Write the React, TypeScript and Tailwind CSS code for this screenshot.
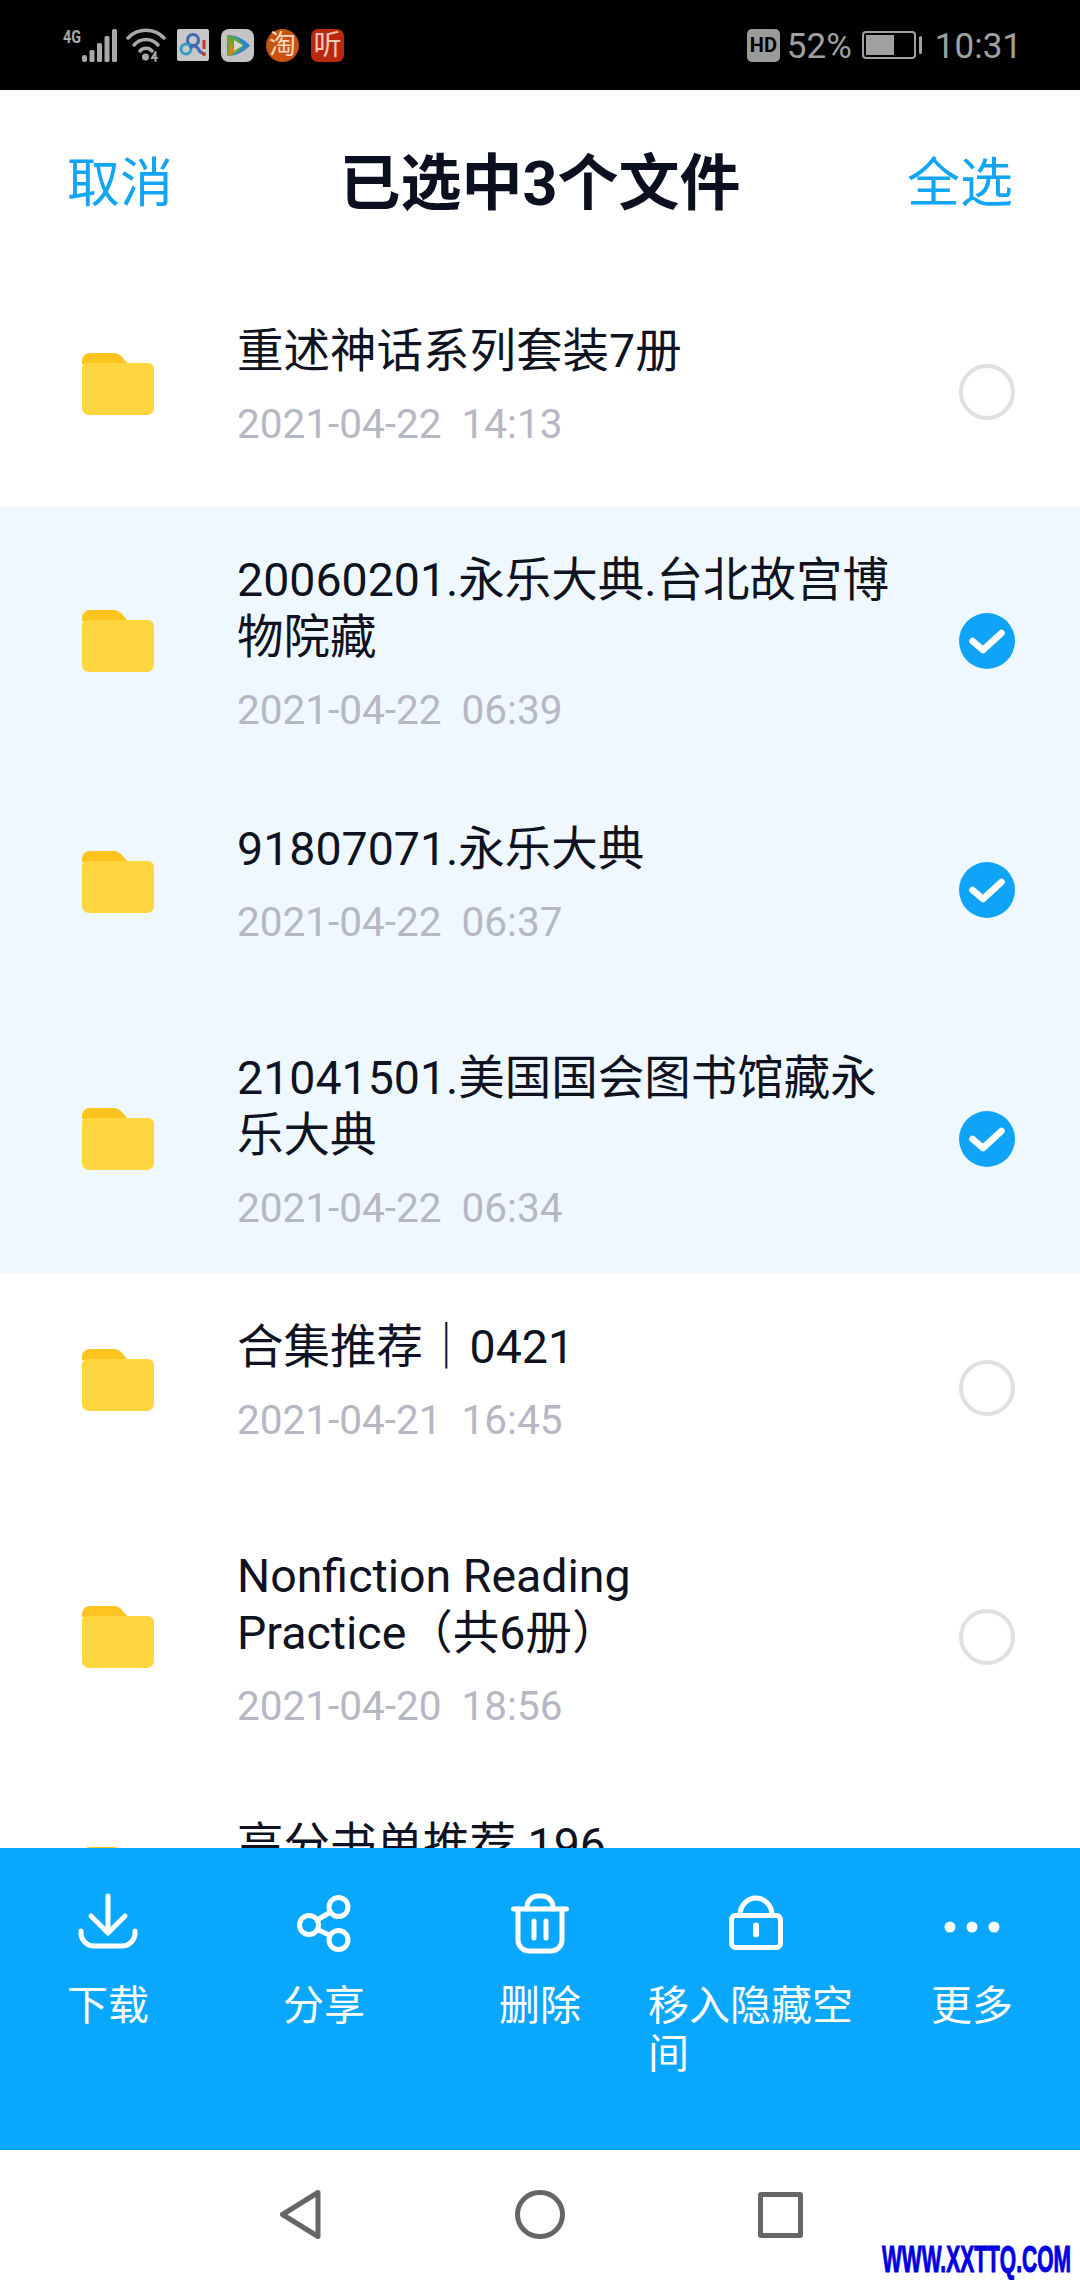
const sans = "font-['Roboto','Noto_Sans_CJK_SC',sans-serif]";

const files = [
  { name: "重述神话系列套装7册", date: "2021-04-22  14:13", two: false, on: false },
  { name: "20060201.永乐大典.台北故宫博物院藏", date: "2021-04-22  06:39", two: true, on: true },
  { name: "91807071.永乐大典", date: "2021-04-22  06:37", two: false, on: true },
  { name: "21041501.美国国会图书馆藏永乐大典", date: "2021-04-22  06:34", two: true, on: true },
  { name: "合集推荐｜0421", date: "2021-04-21  16:45", two: false, on: false },
  { name: "Nonfiction Reading\nPractice（共6册）", date: "2021-04-20  18:56", two: true, on: false },
  { name: "高分书单推荐 196", date: "2021-04-19  20:10", two: false, on: false },
];

const Folder = () => (
  <svg width="72" height="62" viewBox="0 0 72 62" className="shrink-0">
    <path d="M0 8a8 8 0 0 1 8-8h24a10 10 0 0 1 7 3l7 8H0z" fill="#fdc31f" />
    <path d="M0 15a5 5 0 0 1 5-5h61a6 6 0 0 1 6 6v39a7 7 0 0 1-7 7H7a7 7 0 0 1-7-7z" fill="#ffd640" />
  </svg>
);

const Check = ({ on }: { on: boolean }) =>
  on ? (
    <svg width="56" height="56" viewBox="0 0 56 56" className="shrink-0">
      <circle cx="28" cy="28" r="28" fill="#10a4f8" />
      <path d="M13.500 28l10.500 9 18.500-17" fill="none" stroke="#fff" strokeWidth="6.500" strokeLinecap="round" strokeLinejoin="round" />
    </svg>
  ) : (
    <div className="w-[56px] h-[56px] rounded-full border-[4px] border-[#e0e0e0] shrink-0" />
  );

const Row = ({ file }: { file: (typeof files)[number] }) => (
  <div className={`flex items-center shrink-0 pl-[82px] pr-[65px] ${file.two ? "h-[269px]" : "h-[229px]"} ${file.on ? "bg-[#eff8fe]" : "bg-white"}`}>
    <div className={`flex flex-1 items-center ${file.two ? "" : "pb-[15px]"}`}>
      <Folder />
      <div className={`w-[662px] ml-[83px] ${file.two ? "pt-[4px]" : "pt-[2px]"}`}>
        <div className="text-[46.500px] leading-[57px] text-[#0f1220] whitespace-pre-line">{file.name}</div>
        <div className="text-[40.500px] leading-[47px] mt-[21px] text-[#b5b7c3] whitespace-pre">{file.date}</div>
      </div>
    </div>
    <Check on={file.on} />
  </div>
);

const actions = [
  {
    label: "下载",
    icon: (
      <>
        <path d="M31 4v36M14 24l17 17 17-17" />
        <path d="M4 39v2a13 13 0 0 0 13 13h28a13 13 0 0 0 13-13v-2" />
      </>
    ),
  },
  {
    label: "分享",
    icon: (
      <>
        <circle cx="45.500" cy="15" r="9.500" />
        <circle cx="16" cy="33" r="9.500" />
        <circle cx="45.500" cy="48" r="9.500" />
        <path d="M24 28l13.500-8M24.500 37.500l12.500 6" />
      </>
    ),
  },
  {
    label: "删除",
    icon: (
      <>
        <path d="M4.500 17h53" />
        <path d="M18 17v-2a11 11 0 0 1 11-11h4a11 11 0 0 1 11 11v2" />
        <path d="M9 17v31a11 11 0 0 0 11 11h22a11 11 0 0 0 11-11V17" />
        <path d="M25 29v17M37 29v17" />
      </>
    ),
  },
  {
    label: "移入隐藏空间",
    icon: (
      <>
        <rect x="6.500" y="23.500" width="49" height="32" rx="4" />
        <path d="M15 23a16 17 0 0 1 32 0" />
        <path d="M31 33.500v9" strokeWidth="6" />
      </>
    ),
  },
  {
    label: "更多",
    icon: (
      <g fill="#fff" stroke="none">
        <circle cx="9" cy="35" r="5.500" />
        <circle cx="31" cy="35" r="5.500" />
        <circle cx="53" cy="35" r="5.500" />
      </g>
    ),
  },
];

const StatusLeft = () => (
  <div className="flex items-center">
    <svg width="54" height="34" viewBox="0 0 54 34" className="overflow-visible">
      <text x="0" y="15" fontSize="19" fontWeight="700" fill="#a8a8a8" fontFamily="Roboto" textLength="18" lengthAdjust="spacingAndGlyphs">4G</text>
      <rect x="19" y="27" width="5" height="7" rx="2.500" fill="#a8a8a8" />
      <rect x="26.500" y="22" width="5" height="12" rx="1.500" fill="#a8a8a8" />
      <rect x="34" y="15" width="5" height="19" rx="1.500" fill="#a8a8a8" />
      <rect x="41.500" y="8" width="5" height="26" rx="1.500" fill="#a8a8a8" />
      <rect x="49" y="1" width="5" height="33" rx="1.500" fill="#a8a8a8" />
    </svg>
    <svg width="40" height="34" viewBox="0 0 40 34" className="ml-[9px]" fill="none" stroke="#a8a8a8" strokeWidth="3.500" strokeLinecap="round">
      <path d="M2 10a25 25 0 0 1 36 0" />
      <path d="M8 17a16 16 0 0 1 24 0" />
      <path d="M14 23a8 8 0 0 1 12 0" />
      <circle cx="19.500" cy="29" r="3.500" fill="#a8a8a8" stroke="none" />
      <path d="M29 25l-3 5h5M29.500 24v9" strokeWidth="2" />
    </svg>
    <svg width="32" height="32" viewBox="0 0 32 32" className="ml-[11px]">
      <rect width="32" height="32" rx="2" fill="#c8c8c8" />
      <circle cx="16" cy="11" r="5.500" fill="none" stroke="#3f67b0" strokeWidth="3" />
      <circle cx="9" cy="20" r="5" fill="none" stroke="#2f9cc4" strokeWidth="3" />
      <path d="M13 19c3-3 6-3 9 2 1 2 3 3 4 3" fill="none" stroke="#3f67b0" strokeWidth="3" />
      <path d="M27 11v9" stroke="#c0392b" strokeWidth="3" />
      <circle cx="27" cy="25" r="2" fill="#c0392b" />
    </svg>
    <svg width="33" height="33" viewBox="0 0 33 33" className="ml-[12px]">
      <rect width="33" height="33" rx="8" fill="#c4c4c4" />
      <path d="M6 6c10 0 18 5 23 10.500C24 22 16 27 6 27z" fill="#2e87c9" />
      <path d="M6 6c8 1 13 5 16 10.500C19 22 14 26 6 27z" fill="#5aa93c" />
      <path d="M6 8c3 3 4 14 0 19 3-1 6-2 8-5-3-5-4-10-8-14z" fill="#d9831f" />
      <path d="M13 11l9 5.500-9 5.500z" fill="#d7d7d7" />
    </svg>
    <div className="w-[33px] h-[33px] ml-[12px] rounded-full bg-[#c8530f] text-[#f6d9c0] text-[27px] leading-[33px] text-center">淘</div>
    <div className="w-[33px] h-[33px] ml-[12px] rounded-[7px] bg-[#b9280f] text-[#f3c9b6] text-[28px] leading-[33px] text-center">听</div>
  </div>
);

const StatusRight = () => (
  <div className="flex items-center text-[#a0a0a0] text-[35px]">
    <div className="w-[33px] h-[33px] rounded-[5px] bg-[#9a9a9a] text-black text-[20px] font-bold leading-[33px] text-center">HD</div>
    <span className="ml-[7px] leading-none pt-[2px]">52%</span>
    <div className="ml-[10px] w-[54px] h-[28px] rounded-[4px] border-[2px] border-[#a0a0a0] p-[2px]">
      <div className="w-[28px] h-full bg-[#a0a0a0]" />
    </div>
    <div className="ml-[3px] w-[3px] h-[18px] rounded-full bg-[#a0a0a0]" />
    <span className="ml-[13px] leading-none pt-[2px]">10:31</span>
  </div>
);

export default function App() {
  return (
    <div className={`relative flex flex-col w-[1080px] h-[2280px] overflow-hidden bg-white ${sans}`}>
      <div className="flex items-center justify-between h-[90px] shrink-0 bg-black pl-[63px] pr-[58px]">
        <StatusLeft />
        <StatusRight />
      </div>

      <div className="flex items-center justify-between h-[187px] shrink-0 px-[67px] pt-[2px]">
        <span className="text-[53px] text-[#12a5f4]">取消</span>
        <span className="text-[61px] font-bold text-[#0b1020]">已选中3个文件</span>
        <span className="text-[53px] text-[#12a5f4]">全选</span>
      </div>

      <div className="flex-1 min-h-0 overflow-hidden flex flex-col">
        {files.map((file) => (
          <Row key={file.name} file={file} />
        ))}
      </div>

      <div className="grid grid-cols-5 h-[302px] shrink-0 bg-[#0aa7ff] pt-[44px]">
        {actions.map((a) => (
          <div key={a.label} className="flex flex-col items-center text-white">
            <svg width="62" height="62" viewBox="0 0 62 62" fill="none" stroke="#fff" strokeWidth="5" strokeLinecap="round" strokeLinejoin="round">
              {a.icon}
            </svg>
            <div className="mt-[28px] text-[41px] leading-[48px] text-left">{a.label}</div>
          </div>
        ))}
      </div>

      <div className="flex justify-center items-start h-[130px] shrink-0 pt-[40px]">
        <div className="w-[240px] flex justify-center">
          <svg width="41" height="49" viewBox="0 0 41 49" fill="none" stroke="#666" strokeWidth="5" strokeLinejoin="round">
            <path d="M38 2.500L2.500 24.500 38 46.500z" />
          </svg>
        </div>
        <div className="w-[240px] flex justify-center">
          <div className="w-[50px] h-[49px] rounded-full border-[5px] border-[#666]" />
        </div>
        <div className="w-[240px] flex justify-center">
          <div className="w-[45px] h-[46px] mt-[2px] rounded-[3px] border-[5px] border-[#666]" />
        </div>
      </div>

      <div className="absolute left-[882px] top-[2247px] whitespace-nowrap font-['Liberation_Sans',sans-serif] font-bold text-[21px] leading-[26px] text-[#0000e0] [-webkit-text-stroke:0.6px_#0000e0] scale-y-[1.72]">
        WWW.XXTTQ.COM
      </div>
    </div>
  );
}
